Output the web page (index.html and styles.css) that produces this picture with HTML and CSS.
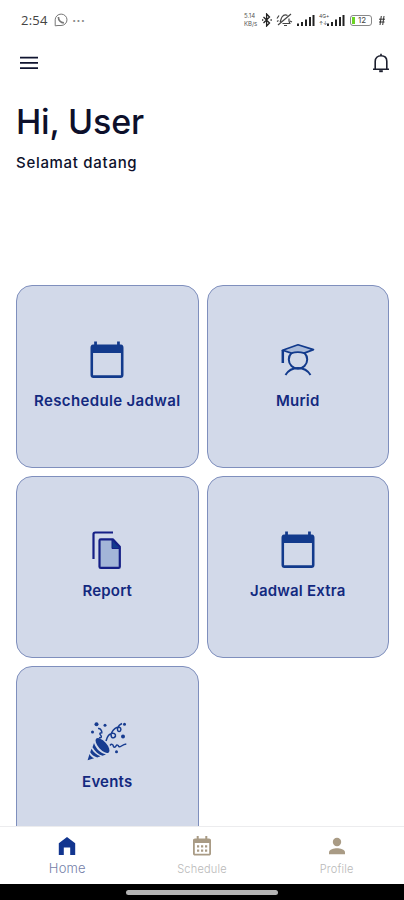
FILE: index.html
```html
<!DOCTYPE html>
<html lang="id">

<head>
    <meta charset="utf-8">
    <title>Home</title>
    <meta name="viewport" content="width=device-width, initial-scale=1">
    <link rel="stylesheet" href="styles.css">
</head>

<body>
<div class="app">
    <div class="status-bar">
        <span class="time">2:54</span>
        <svg class="whatsapp" width="14" height="14" viewBox="0 0 14 14" fill="none" stroke="#777">
            <path d="M1.200 12.800V6.800A5.900 5.700 0 1 1 7 12.500H4z"/>
            <path d="M4.400 4c0 3.300 2.500 5.600 5.500 5.800" stroke-width="1.700"/>
        </svg>
        <span class="more">···</span>
        <div class="indicators">
            <div class="speed"><span>5.14</span><span>KB/s</span></div>
            <svg width="10" height="14" viewBox="0 0 10 14" fill="none" stroke="#222" stroke-width="1.300">
                <path d="M1.500 4l6 6L4.600 13V1l2.900 3-6 6"/>
                <path d="M0 7h1.300M8.500 7h1.300"/>
            </svg>
            <svg class="mute" width="17" height="14" viewBox="0 0 17 14" fill="none" stroke="#444" stroke-width="1.200">
                <path d="M2 12L15 1M4 9c1-1 .6-3 2-5 1.200-1.700 3.500-2.500 5.500-1.500M13 5.500c-.3 1.500 0 3 .8 5H6.500M8 12.500h3"/>
                <path d="M1 5.500l2-3M14 8l2 1M1 8.500l1.500-1"/>
            </svg>
            <svg class="signal" width="18" height="12" viewBox="0 0 18 12" fill="#222">
                <path d="M0 9.500h2V12H0zM4 8h2v4H4zM8 5.500h2V12H8zM12 3h2v9h-2zM15.500 1h2v11h-2z"/>
            </svg>
            <div class="network"><span>4G+</span><span>↑↓</span></div>
            <svg class="signal second" width="18" height="12" viewBox="0 0 18 12" fill="#222">
                <path d="M0 9.500h2V12H0zM4 8h2v4H4zM8 5.500h2V12H8zM12 3h2v9h-2zM15.500 1h2v11h-2z"/>
            </svg>
            <span class="battery"><i class="charge"></i>12</span>
            <svg class="bolt" width="6" height="9" viewBox="0 0 6 9" fill="none" stroke="#333">
                <path d="M2.300 0L1 9M5 0L3.700 9M0 3.200h6M0 6h5.500"/>
            </svg>
        </div>
    </div>

    <div class="toolbar">
        <svg width="18" height="14" viewBox="0 0 18 14" stroke="#101430" stroke-width="1.800">
            <path d="M0 1.700h18M0 6.900h18M0 12.100h18"/>
        </svg>
        <svg width="18" height="20" viewBox="0 0 18 20" fill="none" stroke="#1c1f2e" stroke-width="1.600">
            <path d="M1 16.200h16M3.200 16V8.300C3.200 4.800 5.600 2.800 9 2.800s5.800 2 5.800 5.500V16M9 3V.8"/>
            <path d="M7.200 18.200h3.600" stroke-width="2"/>
        </svg>
    </div>

    <div class="greeting">
        <h1>Hi, User</h1>
        <p>Selamat datang</p>
    </div>

    <div class="menu">
        <div class="card">
            <svg class="icon" viewBox="0 0 24 24" fill="#123a8c">
                <path d="M19.600 3H19V1.300h-1.500V3h-11V1.300H5V3h-.6C3.400 3 3 3.900 3 4.800v14.900c0 1 .6 1.600 1.600 1.600h14.800c1 0 1.600-.6 1.600-1.600V4.800c0-.9-.4-1.800-1.400-1.800zm0 16.800H4.400V7.700h15.200v12.100z"/>
            </svg>
            <span class="label wide">Reschedule Jadwal</span>
        </div>
        <div class="card">
            <svg class="icon" viewBox="0 0 44 44" fill="none" stroke="#123a8c" stroke-width="2">
                <circle cx="22" cy="20.500" r="9.200"/>
                <path d="M6.500 11.300L22 5.800l15.500 4.800-9.300 3.500c-3.500-1.100-9.200-1.100-12.700 0z" fill="#a9bad9" stroke-linejoin="round" stroke-width="1.700"/>
                <path d="M6.800 11v13" stroke-width="2.500"/>
                <path d="M9.500 36c3-5 7.300-7 12.500-7s9.500 2 12.500 7"/>
            </svg>
            <span class="label">Murid</span>
        </div>
        <div class="card">
            <svg class="icon" viewBox="0 0 44 44" fill="none" stroke="#151f86" stroke-width="2.200" stroke-linejoin="round">
                <path d="M8.500 30V5.200c0-1 .5-1.700 1.700-1.700H28"/>
                <path d="M15.800 10.300h12l7 7.500v19.900c0 .7-.5 1.200-1.200 1.200H15.800c-.8 0-1.300-.5-1.300-1.200V11.500c0-.7.5-1.200 1.300-1.200z" fill="#a3b5d8"/>
                <path d="M27 10.500v9h8z" fill="#123a8c" stroke-width="1"/>
            </svg>
            <span class="label">Report</span>
        </div>
        <div class="card">
            <svg class="icon" viewBox="0 0 24 24" fill="#123a8c">
                <path d="M19.600 3H19V1.300h-1.500V3h-11V1.300H5V3h-.6C3.400 3 3 3.900 3 4.800v14.900c0 1 .6 1.600 1.600 1.600h14.800c1 0 1.600-.6 1.600-1.600V4.800c0-.9-.4-1.800-1.400-1.800zm0 16.800H4.400V7.700h15.200v12.100z"/>
            </svg>
            <span class="label">Jadwal Extra</span>
        </div>
        <div class="card">
            <svg class="icon" viewBox="0 1 44 44" fill="#173c90" stroke="#173c90">
                <!-- cone -->
                <ellipse cx="17.500" cy="26.500" rx="9.300" ry="4.200" transform="rotate(48 17.500 26.500)" stroke="none"/>
                <path d="M9 24l-1.500 4.200c2.500 4 5.500 7 10 8.600l3.500-1.300C15.500 34 11 30 9 24zM6.500 29.700l-1.300 3.500c1.500 2.500 3.800 4.300 7 5.200l3.300-1.200c-4-1.500-7-4-9-7.500zM4.500 35l-1.900 6.200 6.500-1.900C7 38.500 5.500 37 4.500 35z" stroke="none"/>
                <!-- ribbons -->
                <g fill="none" stroke-width="1.500">
                    <path d="M21 22c1-4 3.500-7.500 6.500-7.800 3.200-.2 4 3 1.700 4.300-2.700 1.300-4-2-2.500-5 1.700-3.500 5-5.800 7.500-5.200s2 4 0 4.200c-2.400 0-2.200-4.200.3-6.500L37 4.500"/>
                    <path d="M25 26.500c1.500-2 3-1.200 3.300.5s2 1.500 2.700 0 2.200-1 2.800.5c1.500 1.500 3-2 7.500-2.500"/>
                    <path d="M14 18.500c2.500 1 3-1.200 1.500-2.500s0-3 2-2M13 9.500c3-.5 3.500 1.500 4 4.200"/>
                </g>
                <g stroke="none">
                    <circle cx="11.500" cy="5.300" r="2"/><circle cx="20" cy="6.300" r="1.500"/>
                    <circle cx="7.500" cy="13" r="1.500"/><circle cx="39.500" cy="5.200" r="1.500"/>
                    <circle cx="38" cy="17.500" r="2"/><circle cx="31.500" cy="32.800" r="1.500"/>
                </g>
            </svg>
            <span class="label">Events</span>
        </div>
    </div>

    <div class="tabs">
        <div class="tab active">
            <svg width="18" height="19" viewBox="0 0 18 19" fill="#12358f">
                <path d="M9 .5l8.200 6.300v11.700h-5V11H5.800v7.500h-5V6.800z"/>
            </svg>
            <span>Home</span>
        </div>
        <div class="tab">
            <svg width="18" height="20" viewBox="0 0 18 20" fill="#a99b85" fill-rule="evenodd">
                <path d="M2 2.500h1.700V0h2v2.500h6.600V0h2v2.500H16c1.100 0 2 .7 2 1.800v13.400c0 1.100-.9 1.800-2 1.800H2c-1.100 0-2-.7-2-1.800V4.300c0-1.100.9-1.800 2-1.800zM1.800 7v10.700h14.400V7z"/>
                <path d="M4 9.300h2.200v2.200H4zM8 9.300h2.200v2.200H8zM12 9.300h2.200v2.200H12zM4 13.500h2.200v2.200H4zM8 13.500h2.200v2.200H8zM12 13.500h2.200v2.200H12z"/>
            </svg>
            <span>Schedule</span>
        </div>
        <div class="tab">
            <svg width="18" height="18" viewBox="0 0 18 18" fill="#a99b85">
                <circle cx="9" cy="5" r="4.200"/>
                <path d="M1 17.300v-2c0-2.800 5-4 8-4s8 1.200 8 4v2z"/>
            </svg>
            <span>Profile</span>
        </div>
    </div>
    <div class="gesture-bar"><div class="handle"></div></div>
</div>
</body>

</html>
```
FILE: styles.css
```css
* {
    box-sizing: border-box;
}

body {
    margin: 0;
    background: #fff;
    font-family: Inter, "Liberation Sans", sans-serif;
}

.app {
    display: flex;
    flex-direction: column;
    height: 900px;
    overflow: hidden;
}

svg {
    display: block;
    flex: none;
}

/* status bar */
.status-bar {
    display: flex;
    align-items: center;
    flex: none;
    height: 40px;
    padding: 0 19px 0 21px;
    color: #444;
}

.time {
    width: 33px;
    font-family: "Open Sans", sans-serif;
    font-size: 13px;
    letter-spacing: 0.2px;
}

.more {
    margin-left: 4px;
    font-size: 15px;
    color: #888;
}

.indicators {
    display: flex;
    align-items: center;
    margin-left: auto;
}

.speed,
.network {
    display: flex;
    flex-direction: column;
}

.speed {
    width: 18px;
    font-size: 6px;
    line-height: 8px;
    color: #555;
}

.mute {
    margin-left: 4px;
}

.signal {
    margin-left: 4px;
}

.network {
    width: 11px;
    margin-left: 4px;
    font-size: 5px;
    line-height: 7px;
}

.signal.second {
    margin-left: -3px;
}

.battery {
    display: flex;
    align-items: center;
    gap: 3px;
    width: 22px;
    height: 11px;
    margin-left: 5px;
    padding: 0 1px;
    border: 1px solid #888;
    border-radius: 3px;
    font-size: 8px;
}

.charge {
    width: 3px;
    height: 7px;
    background: #6bd323;
}

.bolt {
    margin-left: 7px;
}

/* header */
.toolbar {
    display: flex;
    align-items: center;
    justify-content: space-between;
    flex: none;
    height: 46px;
    padding: 0 14px 0 20px;
}

.greeting {
    flex: none;
    height: 199px;
    padding: 15px 16px 0;
    color: #0d102b;
}

.greeting h1 {
    margin: 0;
    font-size: 34px;
    font-weight: 500;
    line-height: 42px;
    letter-spacing: -0.2px;
}

.greeting p {
    margin: 10px 0 0;
    font-size: 15px;
    font-weight: 500;
    line-height: 20px;
    letter-spacing: 0.7px;
}

/* cards */
.menu {
    display: grid;
    grid-template-columns: 1fr 1fr;
    grid-auto-rows: 182.5px;
    gap: 8px;
    flex: 1;
    min-height: 0;
    padding: 0 15px 0 16px;
    overflow: hidden;
}

.card {
    display: flex;
    flex-direction: column;
    align-items: center;
    justify-content: center;
    gap: 8px;
    padding-bottom: 3px;
    border: 1px solid #7f8fbd;
    border-radius: 16px;
    background: #d2d9e9;
}

.icon {
    width: 44px;
    height: 44px;
}

.label {
    font-size: 15px;
    font-weight: 600;
    line-height: 20px;
    letter-spacing: 0.2px;
    color: #13297f;
}

.label.wide {
    letter-spacing: 0.35px;
}

/* bottom navigation */
.tabs {
    display: flex;
    flex: none;
    height: 58px;
    border-top: 1px solid #ececee;
}

.tab {
    display: flex;
    flex: 1;
    flex-direction: column;
    align-items: center;
    padding-top: 9px;
    font-size: 11px;
    font-weight: 300;
    color: #b9b9b9;
}

.tab svg {
    height: 20px;
}

.tab span {
    margin-top: 5px;
    line-height: 16px;
    letter-spacing: 0.2px;
}

.tab.active span {
    margin-top: 4px;
    font-size: 13px;
    color: #7480a8;
}

.gesture-bar {
    display: flex;
    justify-content: center;
    flex: none;
    height: 16px;
    padding-top: 6px;
    background: #000;
}

.handle {
    width: 152px;
    height: 5px;
    border-radius: 3px;
    background: #b4b4b4;
}
```
